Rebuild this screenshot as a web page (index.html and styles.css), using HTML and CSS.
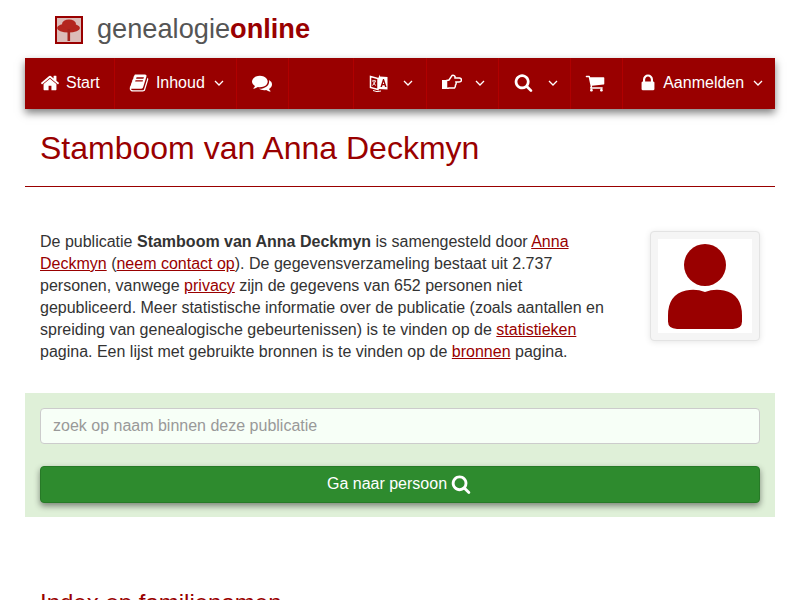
FILE: index.html
```html
<!DOCTYPE html>
<html lang="nl">
<head>
    <meta charset="UTF-8">
    <meta name="viewport" content="width=device-width, initial-scale=1.0">
    <title>Stamboom van Anna Deckmyn</title>
    <link rel="stylesheet" href="styles.css">
</head>
<body>

    <div class="container">

        <header class="brand">
            <svg class="brand-logo" viewBox="0 0 28 28">
                <rect x="1" y="1" width="26" height="26" fill="#dcbcb8" stroke="#990000" stroke-width="2"/>
                <g class="tree">
                    <ellipse cx="13.500" cy="12" rx="11.500" ry="4.500" fill="#b3261e"/>
                    <ellipse cx="14" cy="8" rx="7" ry="4.500" fill="#b3261e"/>
                    <path d="M12.500 13h2.600v12h-2.600z" fill="#a5231c"/>
                </g>
            </svg>
            <span class="brand-name">genealogie<b>online</b></span>
        </header>

        <nav class="navbar">
            <a class="nav-item nav-start" href="#">
                <svg class="icon" viewBox="0 0 1792 1792"><path d="M1472 992v480q0 26-19 45t-45 19h-384v-384h-256v384h-384q-26 0-45-19t-19-45v-480q0-1 .5-3t.5-3l575-474 575 474q1 2 1 6zm223-69l-62 74q-8 9-21 11h-3q-13 0-21-7l-692-577-692 577q-12 8-24 7-13-2-21-11l-62-74q-8-10-7-23.5t11-21.5l719-599q32-26 76-26t76 26l244 204v-195q0-14 9-23t23-9h192q14 0 23 9t9 23v408l219 182q10 8 11 21.5t-7 23.5z"/></svg>
                <span>Start</span>
            </a>
            <a class="nav-item nav-content" href="#">
                <svg class="icon" viewBox="0 0 1792 1792"><path d="M1703 478q40 57 18 129l-275 906q-19 64-76.500 107.500t-122.500 43.500h-923q-77 0-148.500-53.500t-99.500-131.500q-24-67-2-127 0-4 3-27t4-37q1-8-3-21.500t-3-19.500q2-11 8-21t16.500-23.500 16.500-23.500q23-38 45-91.500t30-91.500q3-10 .5-30t-.5-28q3-11 17-28t17-23q21-36 42-92t25-90q1-9-2.500-32t.5-28q4-13 22-30.500t22-22.500q19-26 42.500-84.500t27.500-96.500q1-8-3-25.500t-2-26.500q2-8 9-18t18-23 17-21q8-12 16.500-30.500t15-35 16-36 19.500-32 26.500-23.500 36-11.500 47.500 5.500l-1 3q38-9 51-9h761q74 0 114 56t18 130l-274 906q-36 119-71.500 153.500t-128.500 34.500h-869q-27 0-38 15-11 16-1 43 24 70 144 70h923q29 0 56-15.500t35-41.500l300-987q7-22 5-57 38 15 59 43zm-1064 2q-4 13 2 22.500t20 9.500h608q13 0 25.500-9.500t16.500-22.500l21-64q4-13-2-22.500t-20-9.500h-608q-13 0-25.500 9.500t-16.500 22.500zm-83 256q-4 13 2 22.500t20 9.500h608q13 0 25.500-9.500t16.500-22.500l21-64q4-13-2-22.500t-20-9.500h-608q-13 0-25.500 9.500t-16.500 22.500z"/></svg>
                <span>Inhoud</span>
                <svg class="caret" viewBox="0 0 10 6"><path d="M1 1l4 4 4-4"/></svg>
            </a>
            <a class="nav-item nav-chat" href="#">
                <svg class="icon" viewBox="0 0 1792 1792"><path d="M1408 768q0 139-94 257t-256.500 186.500-353.500 68.500q-86 0-176-16-124 88-278 128-36 9-86 16h-3q-11 0-20.500-8t-11.500-21q-1-3-1-6.500t.5-6.500 2-6l2.500-5 3.500-5.500 4-5 4.500-5 4-4.500q5-6 23-25t26-29.500 22.500-29 25-38.500 20.500-44q-124-72-195-177t-71-224q0-139 94-257t256.500-186.500 353.500-68.500 353.500 68.500 256.500 186.500 94 257zm384 256q0 120-71 224.500t-195 176.500q10 24 20.500 44t25 38.500 22.500 29 26 29.500 23 25q1 1 4 4.500t4.500 5 4 5 3.500 5.500l2.500 5 2 6 .5 6.500-1 6.500q-3 14-13 22t-22 7q-50-7-86-16-154-40-278-128-90 16-176 16-271 0-472-132 58 4 88 4 161 0 309-45t264-129q125-92 192-212t67-254q0-77-23-152 129 71 204 178t75 230z"/></svg>
            </a>
            <div class="nav-spacer"></div>
            <a class="nav-item nav-lang" href="#">
                <svg class="icon icon-lang" viewBox="0 0 20 20">
                    <path class="line" d="M1.500 3.500l7.500 2v11l-7.500-2z"/>
                    <path d="M9 5.500l2-4v2l7.500 .5v12.500l-9.500-.5z"/>
                    <path class="cut" d="M14 6l-2.600 8h1.600l.5-1.700h2l.5 1.700h1.600l-2.600-8zM13.800 11l.7-2.300.7 2.300z"/>
                    <path class="line thin" d="M3 8h4M5 7v1M3.500 12.500l3-4M4.500 9.500l2 3M4 17.500q4 2 8 .5"/>
                </svg>
                <svg class="caret" viewBox="0 0 10 6"><path d="M1 1l4 4 4-4"/></svg>
            </a>
            <a class="nav-item nav-hand" href="#">
                <svg class="icon icon-hand" viewBox="0 0 20 18">
                    <path class="line" d="M4.500 6.500l2.500-.5 3-4.500q2-.7 3 1v1.500h4.500q2 .5 2 2 0 2-2.500 2h-3q.5 2-.5 3 0 2-1 3h-5.500q-1.500 .5-2.500 0z"/>
                    <path d="M0 6h4.500v9h-4.500z"/>
                </svg>
                <svg class="caret" viewBox="0 0 10 6"><path d="M1 1l4 4 4-4"/></svg>
            </a>
            <a class="nav-item nav-search" href="#">
                <svg class="icon icon-search" viewBox="0 0 1792 1792"><path d="M1216 832q0-185-131.500-316.500t-316.500-131.500-316.500 131.500-131.500 316.500 131.500 316.500 316.500 131.500 316.500-131.500 131.500-316.500zm512 832q0 52-38 90t-90 38q-54 0-90-38l-343-342q-179 124-399 124-143 0-273.500-55.500t-225-150-150-225-55.500-273.500 55.500-273.500 150-225 225-150 273.500-55.500 273.500 55.500 225 150 150 225 55.500 273.500q0 220-124 399l343 343q37 37 37 90z"/></svg>
                <svg class="caret" viewBox="0 0 10 6"><path d="M1 1l4 4 4-4"/></svg>
            </a>
            <a class="nav-item nav-cart" href="#">
                <svg class="icon" viewBox="0 0 1792 1792"><path d="M704 1536q0 52-38 90t-90 38-90-38-38-90 38-90 90-38 90 38 38 90zm896 0q0 52-38 90t-90 38-90-38-38-90 38-90 90-38 90 38 38 90zm128-1088v512q0 24-16.500 42.500t-40.500 21.500l-1044 122q13 60 13 70 0 16-24 64h920q26 0 45 19t19 45-19 45-45 19h-1024q-26 0-45-19t-19-45q0-11 8-31.500t16-36 21.500-40 15.500-29.500l-177-823h-204q-26 0-45-19t-19-45 19-45 45-19h256q16 0 28.500 6.500t19.500 15.500 13 24.500 8 26 5.500 29.500 4.500 26h1201q26 0 45 19t19 45z"/></svg>
            </a>
            <a class="nav-item nav-login" href="#">
                <svg class="icon" viewBox="0 0 1792 1792"><path d="M640 768h512v-192q0-106-75-181t-181-75-181 75-75 181v192zm832 96v576q0 40-28 68t-68 28h-960q-40 0-68-28t-28-68v-576q0-40 28-68t68-28h32v-192q0-184 132-316t316-132 316 132 132 316v192h32q40 0 68 28t28 68z"/></svg>
                <span>Aanmelden</span>
                <svg class="caret" viewBox="0 0 10 6"><path d="M1 1l4 4 4-4"/></svg>
            </a>
        </nav>

        <h1 class="page-title">Stamboom van Anna Deckmyn</h1>

        <section class="intro">
            <p class="intro-text">De publicatie <b>Stamboom van Anna Deckmyn</b> is samengesteld door <a href="#">Anna Deckmyn</a> (<a href="#">neem contact op</a>). De gegevensverzameling bestaat uit 2.737 personen, vanwege <a href="#">privacy</a> zijn de gegevens van 652 personen niet gepubliceerd. Meer statistische informatie over de publicatie (zoals aantallen en spreiding van genealogische gebeurtenissen) is te vinden op de <a href="#">statistieken</a> pagina. Een lijst met gebruikte bronnen is te vinden op de <a href="#">bronnen</a> pagina.</p>
            <div class="thumb">
                <svg viewBox="0 0 94 94">
                    <rect width="94" height="94" fill="#fff"/>
                    <circle cx="47" cy="26" r="21" fill="#990000"/>
                    <path d="M28 51.500q10-2 19 1.500 9-3.500 19-1.500 18 4 18 25v6q0 7-9 7.500h-56q-9-.5-9-7.500v-6q0-21 18-25z" fill="#990000"/>
                </svg>
            </div>
        </section>

        <form class="search-panel">
            <input class="search-input" type="text" placeholder="zoek op naam binnen deze publicatie">
            <button class="search-btn" type="button">Ga naar persoon
                <svg viewBox="0 0 1792 1792"><path d="M1216 832q0-185-131.500-316.500t-316.500-131.500-316.500 131.500-131.500 316.500 131.500 316.500 316.500 131.500 316.500-131.500 131.500-316.500zm512 832q0 52-38 90t-90 38q-54 0-90-38l-343-342q-179 124-399 124-143 0-273.500-55.500t-225-150-150-225-55.500-273.500 55.500-273.500 150-225 225-150 273.500-55.500 273.500 55.500 225 150 150 225 55.500 273.500q0 220-124 399l343 343q37 37 37 90z"/></svg>
            </button>
        </form>

        <h2 class="section-title">Index op familienamen</h2>

    </div>

</body>
</html>
```

FILE: styles.css
```css
html {
    overflow: hidden;
}

body {
    font-family: 'Liberation Sans', Arial, sans-serif;
    font-size: 16px;
    line-height: 22px;
    color: #333;
    background: #fff;
    margin: 0;
}

.container {
    width: 750px;
    margin: 0 auto;
}

/* brand */

.brand {
    display: flex;
    align-items: center;
    height: 58px;
    padding-left: 30px;
}

.brand-logo {
    width: 28px;
    height: 28px;
    margin-right: 14px;
    margin-top: 2px;
}

.tree {
    filter: blur(0.6px);
}

.brand-name {
    font-size: 27.2px;
    color: #555;
}

.brand-name b {
    color: #990000;
}

/* navbar */

.navbar {
    display: flex;
    height: 51px;
    background: #990000;
    box-shadow: 0 4px 8px rgba(0, 0, 0, 0.5);
}

.nav-item {
    display: flex;
    align-items: center;
    box-sizing: border-box;
    padding-left: 15px;
    padding-bottom: 2px;
    height: 100%;
    color: #fff;
    text-decoration: none;
    border-right: 1px solid #b00000;
}

.nav-spacer {
    width: 64px;
    border-right: 1px solid #b00000;
}

.nav-start { width: 90px; }
.nav-content { width: 122px; padding-left: 14px; }
.nav-chat { width: 52px; }
.nav-lang { width: 74px; }
.nav-hand { width: 72px; }
.nav-search { width: 72px; }
.nav-cart { width: 52px; padding-left: 14px; }
.nav-login { width: 152px; border-right: 0; }

.icon {
    width: 20px;
    height: 20px;
    fill: #fff;
    margin-right: 6px;
    flex: none;
}

.nav-content .icon {
    margin-right: 7px;
}

.nav-login .icon {
    margin-right: 5px;
}

.icon-search {
    width: 19px;
    height: 19px;
}

.icon-lang .line,
.icon-hand .line {
    fill: none;
    stroke: #fff;
    stroke-width: 1.5;
}

.icon-lang .thin {
    stroke-width: 1;
}

.icon-lang .cut {
    fill: #990000;
}

.icon-lang {
    margin-right: 5px;
}

.icon-hand {
    margin-right: 4px;
}

.caret {
    width: 10px;
    height: 6px;
    margin-left: 9px;
    fill: none;
    stroke: #fff;
    stroke-width: 1.3;
    flex: none;
}

/* title */

.page-title {
    margin: 0;
    padding: 21px 15px 20px;
    font-size: 32px;
    line-height: 36px;
    font-weight: normal;
    color: #990000;
    border-bottom: 1px solid #990000;
}

/* intro */

.intro {
    display: flex;
    justify-content: space-between;
    padding: 44px 15px 0;
}

.intro-text {
    margin: 0;
    width: 570px;
}

.intro-text a {
    color: #990000;
}

.thumb {
    box-sizing: border-box;
    width: 110px;
    height: 110px;
    padding: 7px;
    background: #f5f5f5;
    border: 1px solid #e3e3e3;
    border-radius: 4px;
    box-shadow: 0 1px 6px rgba(0, 0, 0, 0.1);
}

.thumb svg {
    display: block;
    width: 94px;
    height: 94px;
}

/* search */

.search-panel {
    margin-top: 30px;
    padding: 15px 15px 14px;
    background: #dff0d8;
}

.search-input {
    display: block;
    box-sizing: border-box;
    width: 100%;
    height: 36px;
    padding: 0 12px;
    font: 16px 'Liberation Sans', Arial, sans-serif;
    background: #f7fff7;
    border: 1px solid #ccc;
    border-radius: 4px;
}

.search-input::placeholder {
    color: #999;
}

.search-btn {
    display: flex;
    justify-content: center;
    align-items: center;
    gap: 4px;
    box-sizing: border-box;
    width: 100%;
    height: 37px;
    margin-top: 22px;
    padding: 0 0 2px;
    font: 16px 'Liberation Sans', Arial, sans-serif;
    color: #fff;
    background: #2e8b2e;
    border: 1px solid #277a27;
    border-radius: 4px;
    box-shadow: 0 3px 6px rgba(0, 0, 0, 0.45);
}

.search-btn svg {
    width: 20px;
    height: 20px;
    margin-right: 2px;
    fill: #fff;
}

/* next section */

.section-title {
    margin: 71px 0 0;
    padding: 0 15px;
    font-size: 24px;
    line-height: 30px;
    font-weight: normal;
    color: #990000;
}
```
